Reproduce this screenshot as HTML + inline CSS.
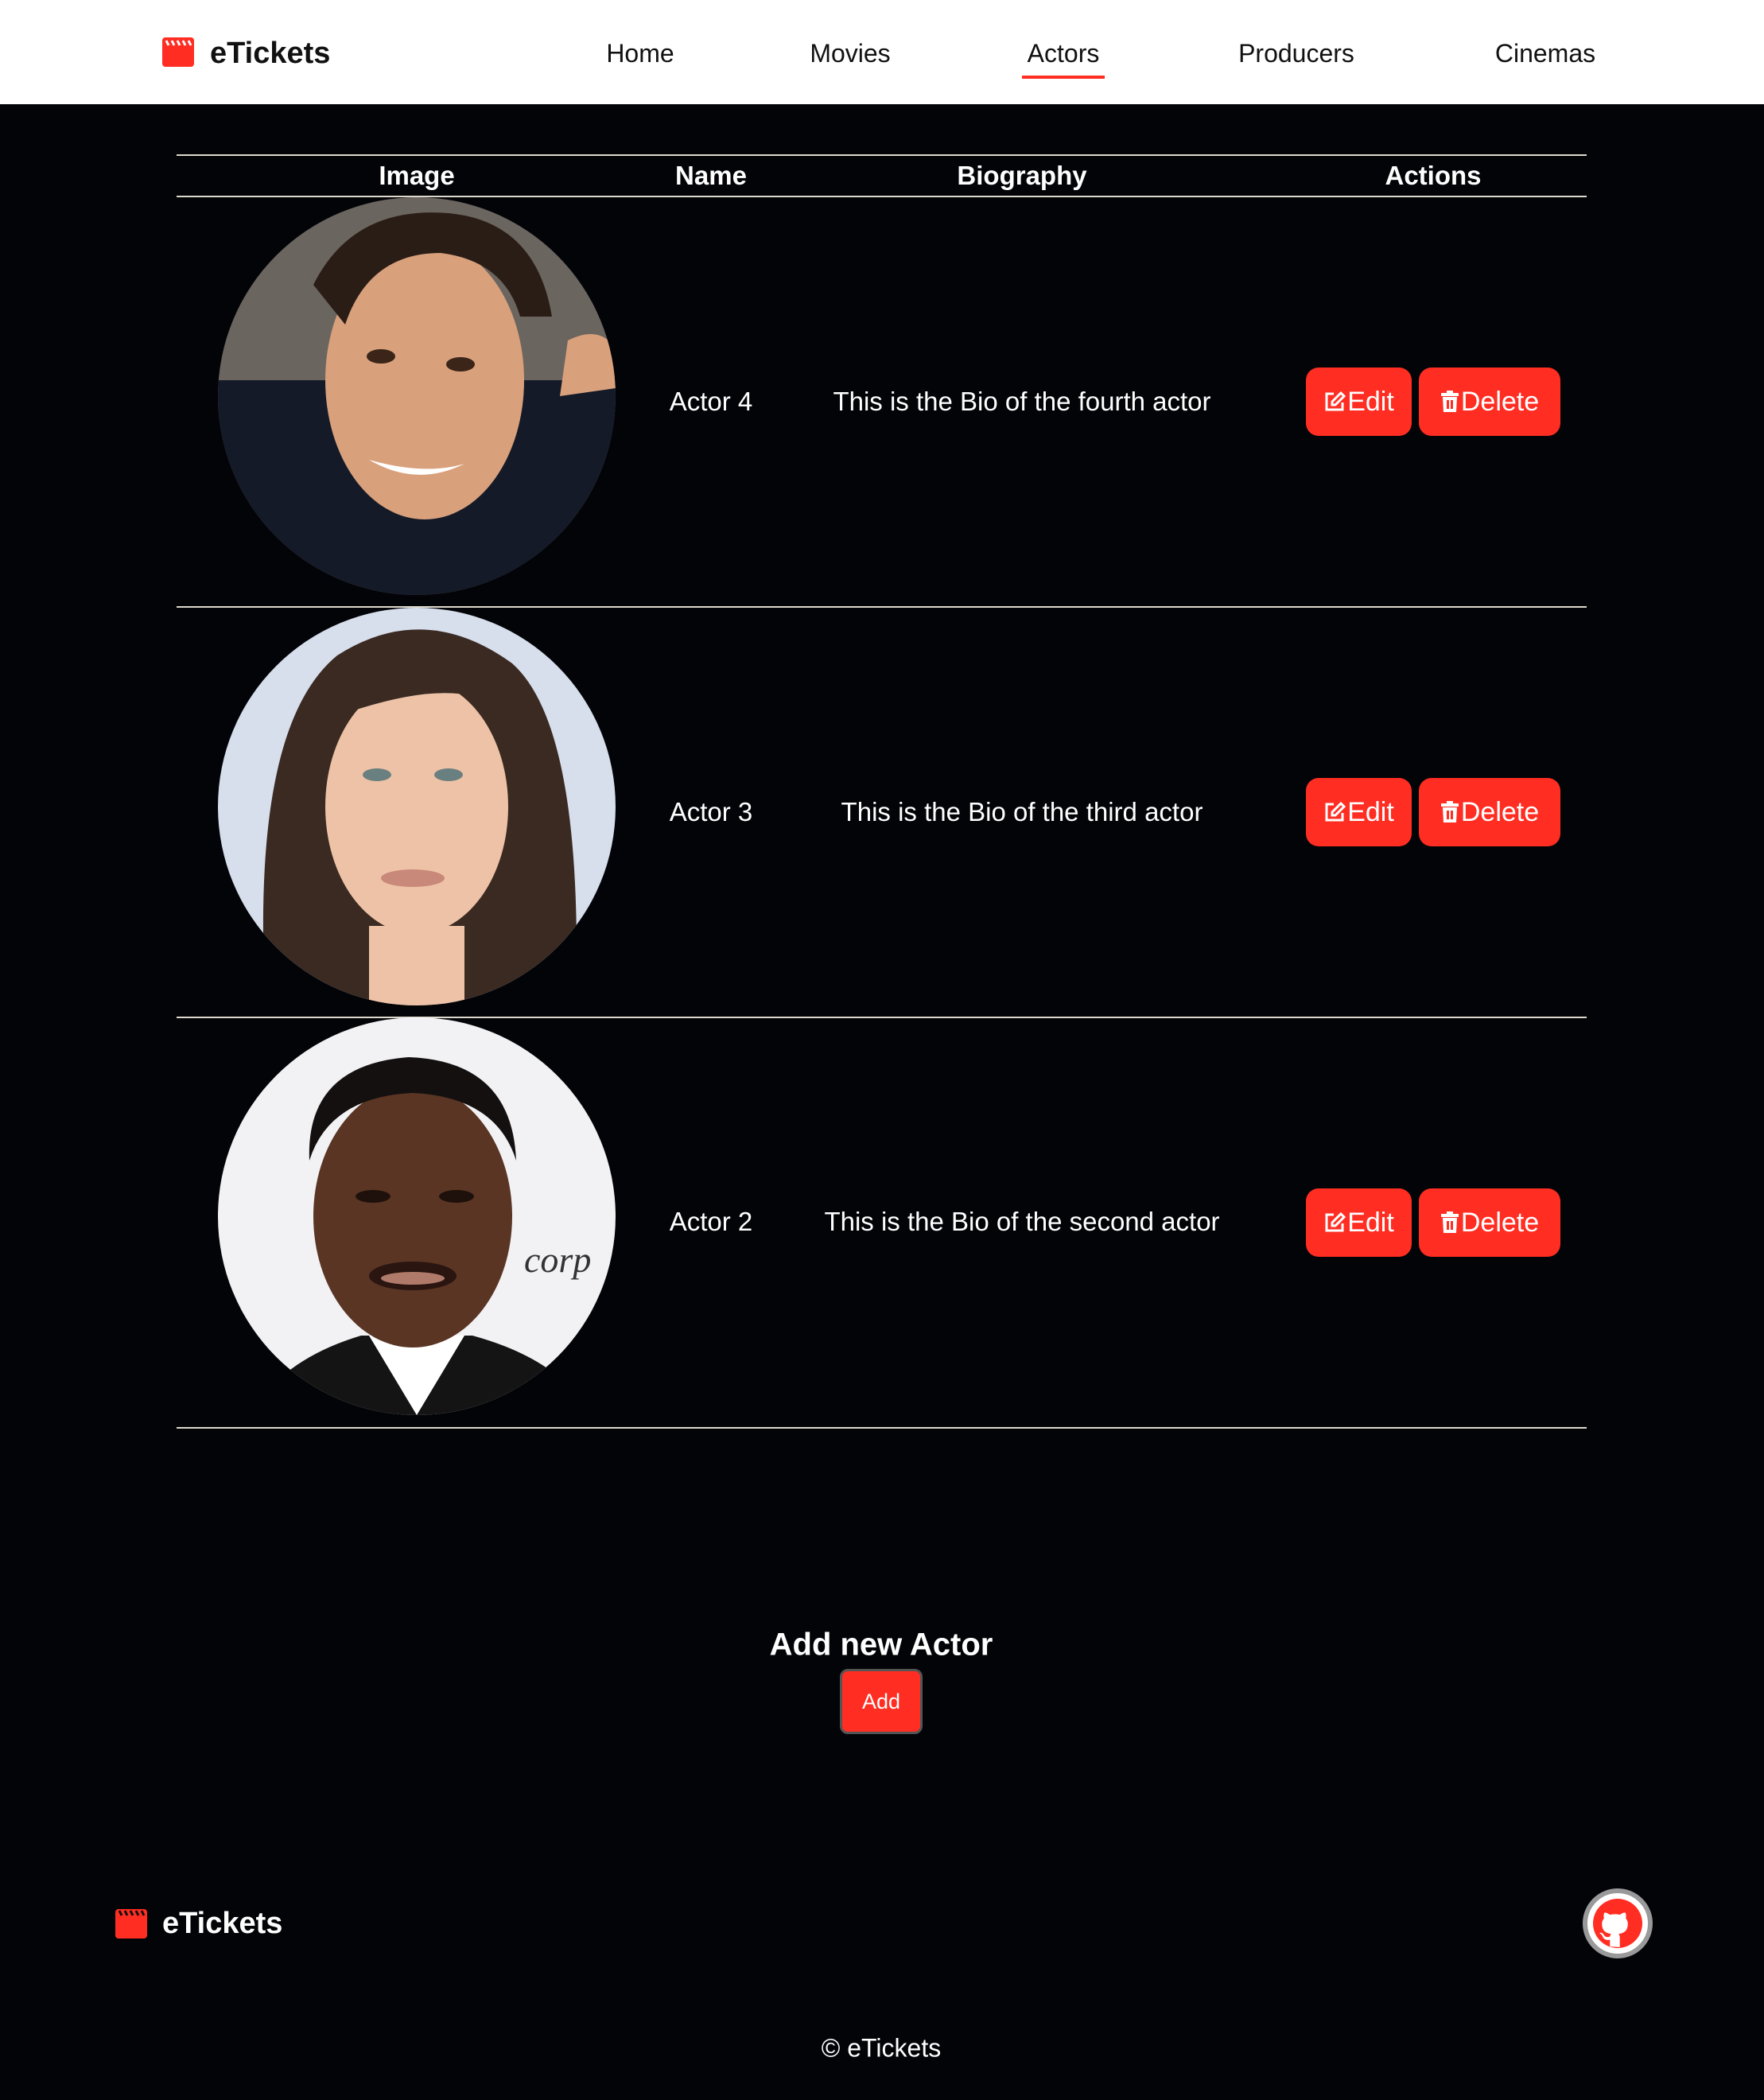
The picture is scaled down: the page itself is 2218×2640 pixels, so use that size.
<!DOCTYPE html>
<html><head><meta charset="utf-8">
<style>
*{margin:0;padding:0;box-sizing:border-box}
html,body{width:2218px;height:2640px;background:#030408;font-family:"Liberation Sans",sans-serif;overflow:hidden}
.abs{position:absolute}
.nav{position:absolute;left:0;top:0;width:2218px;height:131px;background:#fff}
.navi{position:absolute;top:49px;font-size:32px;color:#111;transform:translateX(-50%);white-space:nowrap}
.th{position:absolute;top:202px;font-size:33px;font-weight:bold;color:#fff;transform:translateX(-50%)}
.line{position:absolute;left:222px;width:1773px;height:2px;background:#ddd9cc}
.txt{position:absolute;font-size:33px;color:#fff;transform:translate(-50%,-50%);white-space:nowrap}
.btn{position:absolute;height:86px;background:#ff2d22;border-radius:16px;color:#fff;font-size:34px;display:flex;align-items:center;justify-content:center;gap:2px}
.circ{position:absolute;left:274px;width:500px;height:500px;border-radius:50%;overflow:hidden}
</style></head><body>
<div class="nav">
  <svg class="abs" style="left:204px;top:47px" width="40" height="37" viewBox="0 0 40 37"><rect width="40" height="37" rx="4" fill="#ff2d22"/><path d="M5 4l3 6M12 4l3 6M19 4l3 6M26 4l3 6M33 4l3 6" stroke="#fff" stroke-width="3"/><rect x="0" y="12" width="40" height="2" fill="#ff2d22"/></svg>
  <div class="abs" style="left:264px;top:46px;font-size:38px;font-weight:bold;color:#111">eTickets</div>
  <div class="navi" style="left:805px">Home</div>
  <div class="navi" style="left:1069px">Movies</div>
  <div class="navi" style="left:1337px">Actors</div>
  <div class="navi" style="left:1630px">Producers</div>
  <div class="navi" style="left:1943px">Cinemas</div>
  <div class="abs" style="left:1285px;top:95px;width:104px;height:4px;background:#ff2d22"></div>
</div>

<div class="line" style="top:194px"></div>
<div class="th" style="left:524px">Image</div>
<div class="th" style="left:894px">Name</div>
<div class="th" style="left:1285px">Biography</div>
<div class="th" style="left:1802px">Actions</div>
<div class="line" style="top:246px"></div>

<div class="circ" style="top:248px">
<svg width="500" height="500" viewBox="0 0 500 500">
<rect width="500" height="500" fill="#6b6560"/>
<rect x="0" y="230" width="500" height="270" fill="#151a28"/>
<ellipse cx="260" cy="230" rx="125" ry="175" fill="#d9a07c"/>
<path d="M120 110 Q170 10 290 20 Q400 30 420 150 L380 150 Q360 80 280 70 Q190 70 160 160 Z" fill="#2a1d16"/>
<ellipse cx="205" cy="200" rx="18" ry="9" fill="#3a2518"/><ellipse cx="305" cy="210" rx="18" ry="9" fill="#3a2518"/>
<path d="M190 330 Q250 365 310 335 Q260 350 190 330Z" fill="#fff"/>
<path d="M440 180 Q480 160 500 190 L500 240 L430 250Z" fill="#d9a07c"/>
</svg></div>
<div class="txt" style="left:894px;top:505px">Actor 4</div>
<div class="txt" style="left:1285px;top:505px">This is the Bio of the fourth actor</div>
<div class="line" style="top:762px"></div>

<div class="circ" style="top:764px">
<svg width="500" height="500" viewBox="0 0 500 500">
<rect width="500" height="500" fill="#d7deec"/>
<path d="M60 500 Q40 150 150 60 Q260 -10 370 70 Q460 150 450 500Z" fill="#3a2a22"/>
<ellipse cx="250" cy="250" rx="115" ry="160" fill="#eec2a6"/>
<path d="M140 120 Q250 40 360 130 Q300 80 140 140Z" fill="#3a2a22"/>
<ellipse cx="200" cy="210" rx="18" ry="8" fill="#6a7f80"/><ellipse cx="290" cy="210" rx="18" ry="8" fill="#6a7f80"/>
<ellipse cx="245" cy="340" rx="40" ry="11" fill="#c8887a"/>
<rect x="190" y="400" width="120" height="100" fill="#eec2a6"/>
</svg></div>
<div class="txt" style="left:894px;top:1021px">Actor 3</div>
<div class="txt" style="left:1285px;top:1021px">This is the Bio of the third actor</div>
<div class="line" style="top:1278px"></div>

<div class="circ" style="top:1279px">
<svg width="500" height="500" viewBox="0 0 500 500">
<rect width="500" height="500" fill="#f2f2f4"/>
<path d="M40 500 Q80 430 180 400 L320 400 Q430 430 470 500Z" fill="#141414"/>
<path d="M190 400 L250 500 L310 400Z" fill="#fff"/>
<ellipse cx="245" cy="250" rx="125" ry="165" fill="#5a3524"/>
<path d="M115 180 Q110 60 240 50 Q370 55 375 180 Q350 100 245 95 Q140 100 115 180Z" fill="#151010"/>
<ellipse cx="195" cy="225" rx="22" ry="8" fill="#1e100a"/><ellipse cx="300" cy="225" rx="22" ry="8" fill="#1e100a"/>
<ellipse cx="245" cy="325" rx="55" ry="18" fill="#2a1510"/>
<ellipse cx="245" cy="328" rx="40" ry="8" fill="#b07a6a"/>
<text x="385" y="320" font-family="Liberation Serif" font-style="italic" font-size="46" fill="#333">corp</text>
</svg></div>
<div class="txt" style="left:894px;top:1536px">Actor 2</div>
<div class="txt" style="left:1285px;top:1536px">This is the Bio of the second actor</div>
<div class="line" style="top:1794px"></div>

<div class="btn" style="left:1642px;top:462px;width:133px"><svg width="28" height="28" viewBox="0 0 28 28" fill="none" stroke="#fff" stroke-width="3"><path d="M13 4H4v20h20v-9"/><path d="M22 3l4 4-11 11h-4v-4z"/></svg>Edit</div>
<div class="btn" style="left:1784px;top:462px;width:178px"><svg width="24" height="28" viewBox="0 0 24 28"><rect x="1" y="3" width="22" height="4" fill="#fff"/><rect x="8" y="0" width="8" height="4" fill="#fff"/><path d="M3 8h18l-1 19H4z" fill="#fff"/><rect x="8" y="12" width="3" height="11" fill="#ff2d22"/><rect x="13" y="12" width="3" height="11" fill="#ff2d22"/></svg>Delete</div>
<div class="btn" style="left:1642px;top:978px;width:133px"><svg width="28" height="28" viewBox="0 0 28 28" fill="none" stroke="#fff" stroke-width="3"><path d="M13 4H4v20h20v-9"/><path d="M22 3l4 4-11 11h-4v-4z"/></svg>Edit</div>
<div class="btn" style="left:1784px;top:978px;width:178px"><svg width="24" height="28" viewBox="0 0 24 28"><rect x="1" y="3" width="22" height="4" fill="#fff"/><rect x="8" y="0" width="8" height="4" fill="#fff"/><path d="M3 8h18l-1 19H4z" fill="#fff"/><rect x="8" y="12" width="3" height="11" fill="#ff2d22"/><rect x="13" y="12" width="3" height="11" fill="#ff2d22"/></svg>Delete</div>
<div class="btn" style="left:1642px;top:1494px;width:133px"><svg width="28" height="28" viewBox="0 0 28 28" fill="none" stroke="#fff" stroke-width="3"><path d="M13 4H4v20h20v-9"/><path d="M22 3l4 4-11 11h-4v-4z"/></svg>Edit</div>
<div class="btn" style="left:1784px;top:1494px;width:178px"><svg width="24" height="28" viewBox="0 0 24 28"><rect x="1" y="3" width="22" height="4" fill="#fff"/><rect x="8" y="0" width="8" height="4" fill="#fff"/><path d="M3 8h18l-1 19H4z" fill="#fff"/><rect x="8" y="12" width="3" height="11" fill="#ff2d22"/><rect x="13" y="12" width="3" height="11" fill="#ff2d22"/></svg>Delete</div>

<div class="txt" style="left:1108px;top:2068px;font-size:40px;font-weight:bold">Add new Actor</div>
<div class="abs" style="left:1056px;top:2098px;width:104px;height:82px;background:#ff2d22;border:3px solid #555;border-radius:10px;color:#fff;font-size:27px;display:flex;align-items:center;justify-content:center">Add</div>

<svg class="abs" style="left:145px;top:2400px" width="40" height="37" viewBox="0 0 40 37"><rect width="40" height="37" rx="4" fill="#ff2d22"/><path d="M5 2l3 6M12 2l3 6M19 2l3 6M26 2l3 6M33 2l3 6" stroke="#111" stroke-width="3"/></svg>
<div class="abs" style="left:204px;top:2397px;font-size:38px;font-weight:bold;color:#fff">eTickets</div>
<div class="abs" style="left:1990px;top:2374px;width:88px;height:88px;border-radius:50%;background:#fff;border:6px solid #999;display:flex;align-items:center;justify-content:center">
<svg width="62" height="62" viewBox="0 0 16 16"><circle cx="8" cy="8" r="8" fill="#ff2d22"/><path fill="#fff" d="M5.5 15.5v-2.2c-1.9.4-2.3-.9-2.3-.9-.3-.8-.8-1-.8-1-.6-.4.1-.4.1-.4.7 0 1 .7 1 .7.6 1 1.6.7 2 .6 0-.4.2-.7.4-.9-1.5-.2-3-.8-3-3.3 0-.7.3-1.3.7-1.8-.1-.2-.3-.9.1-1.8 0 0 .6-.2 1.8.7.5-.1 1-.2 1.6-.2s1.1.1 1.6.2c1.2-.9 1.8-.7 1.8-.7.4.9.2 1.6.1 1.8.4.5.7 1.1.7 1.8 0 2.5-1.5 3.1-3 3.3.2.2.4.6.4 1.2v3.1z"/></svg></div>
<div class="txt" style="left:1108px;top:2575px;font-size:32px">© eTickets</div>
</body></html>
